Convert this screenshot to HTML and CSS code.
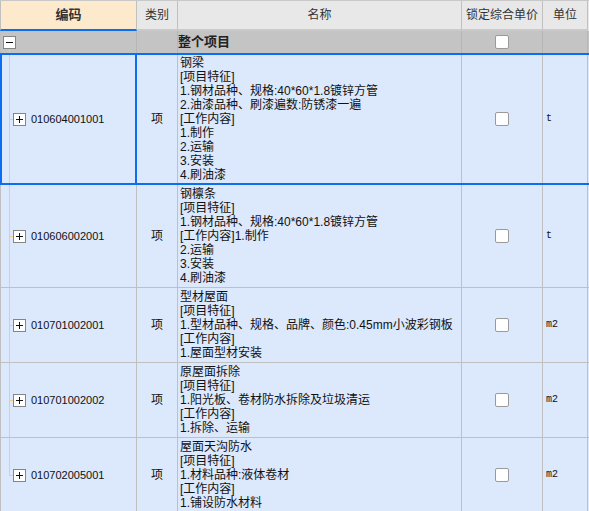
FILE: index.html
```html
<!DOCTYPE html>
<html lang="zh-CN">
<head>
  <meta charset="UTF-8">
  <title>清单</title>
  <link rel="stylesheet" href="styles.css">
</head>
<body>
  <div class="grid">
    <div class="row head">
      <div class="cell code-h">编码</div>
      <div class="cell">类别</div>
      <div class="cell">名称</div>
      <div class="cell">锁定综合单价</div>
      <div class="cell">单位</div>
    </div>

    <div class="row group">
      <div class="cell code"><span class="toggle"></span></div>
      <div class="cell"></div>
      <div class="cell name">整个项目</div>
      <div class="cell check"><span class="box"></span></div>
      <div class="cell"></div>
    </div>

    <div class="row sel">
      <div class="cell code"><span class="toggle plus"></span><span class="num">010604001001</span></div>
      <div class="cell type">项</div>
      <div class="cell name">钢梁<br>[项目特征]<br>1.钢材品种、规格:40*60*1.8镀锌方管<br>2.油漆品种、刷漆遍数:防锈漆一遍<br>[工作内容]<br>1.制作<br>2.运输<br>3.安装<br>4.刷油漆</div>
      <div class="cell check"><span class="box"></span></div>
      <div class="cell unit">t</div>
    </div>

    <div class="row">
      <div class="cell code"><span class="toggle plus"></span><span class="num">010606002001</span></div>
      <div class="cell type">项</div>
      <div class="cell name">钢檩条<br>[项目特征]<br>1.钢材品种、规格:40*60*1.8镀锌方管<br>[工作内容]1.制作<br>2.运输<br>3.安装<br>4.刷油漆</div>
      <div class="cell check"><span class="box"></span></div>
      <div class="cell unit">t</div>
    </div>

    <div class="row">
      <div class="cell code"><span class="toggle plus"></span><span class="num">010701002001</span></div>
      <div class="cell type">项</div>
      <div class="cell name">型材屋面<br>[项目特征]<br>1.型材品种、规格、品牌、颜色:0.45mm小波彩钢板<br>[工作内容]<br>1.屋面型材安装</div>
      <div class="cell check"><span class="box"></span></div>
      <div class="cell unit">m2</div>
    </div>

    <div class="row">
      <div class="cell code"><span class="toggle plus"></span><span class="num">010701002002</span></div>
      <div class="cell type">项</div>
      <div class="cell name">原屋面拆除<br>[项目特征]<br>1.阳光板、卷材防水拆除及垃圾清运<br>[工作内容]<br>1.拆除、运输</div>
      <div class="cell check"><span class="box"></span></div>
      <div class="cell unit">m2</div>
    </div>

    <div class="row last">
      <div class="cell code"><span class="toggle plus"></span><span class="num">010702005001</span></div>
      <div class="cell type">项</div>
      <div class="cell name">屋面天沟防水<br>[项目特征]<br>1.材料品种:液体卷材<br>[工作内容]<br>1.铺设防水材料</div>
      <div class="cell check"><span class="box"></span></div>
      <div class="cell unit">m2</div>
    </div>
  </div>
</body>
</html>
```

FILE: styles.css
```css
html {
  overflow: hidden;
}

body {
  margin: 0;
  background-color: #fff;
  font-family: "Liberation Sans", "Noto Sans CJK SC", sans-serif;
  font-size: 12px;
  color: #111;
}

.grid {
  width: 589px;
}

.row {
  display: grid;
  grid-template-columns: 137px 41px 284px 81px 45px 1fr;
  background-color: #dce8fc;
  border-bottom: 1px solid #c0c0c0;
}

.cell {
  box-sizing: border-box;
  border-right: 1px solid #c0c0c0;
  padding: 2px 0;
  line-height: 14px;
}

.cell:first-child {
  border-left: 1px solid #c0c0c0;
}

/* header */
.head {
  height: 30px;
  background-color: #e8e8e8;
  border-top: 1px solid #c8c8c8;
  border-bottom: none;
}

.head .cell {
  display: flex;
  align-items: center;
  justify-content: center;
  padding: 0;
  color: #333;
  border-bottom: 2px solid #cacaca;
}

.head .code-h {
  background-color: #fde9cc;
  font-weight: bold;
  font-size: 13px;
  border-bottom-color: #0b6df2;
}

/* group row */
.group {
  height: 22px;
  background-color: #c4c4c4;
  border-bottom: none;
}

.group .cell {
  padding: 0;
  border-right-color: #b6b6b6;
}

.group .name {
  display: flex;
  align-items: center;
  font-weight: bold;
  font-size: 13px;
  color: #222;
}

.group .code {
  padding-left: 2px;
}

/* selected row */
.sel {
  border-top: 2px solid #0b6df2;
  border-bottom: 2px solid #0b6df2;
}

.sel .cell {
  padding-top: 1px;
  padding-bottom: 1px;
}

.sel .code {
  border-left: 2px solid #0b6df2;
  border-right: 2px solid #0b6df2;
  padding-left: 11px;
}

/* code column with tree lines */
.code {
  position: relative;
  display: flex;
  align-items: center;
  padding-left: 12px;
}

.code::before {
  content: "";
  position: absolute;
  left: 8px;
  top: 0;
  bottom: 0;
  width: 1px;
  background-color: #f8c887;
}

.code::after {
  content: "";
  position: absolute;
  left: 8px;
  top: 50%;
  width: 4px;
  height: 1px;
  background-color: #f8c887;
}

.sel .code::before,
.sel .code::after {
  left: 7px;
}

.group .code::before {
  top: 17px;
}

.group .code::after {
  display: none;
}

.last .code::before {
  bottom: 50%;
}

.toggle {
  position: relative;
  box-sizing: border-box;
  width: 13px;
  height: 13px;
  border: 1px solid #858585;
  background-color: #fff;
  flex-shrink: 0;
}

.toggle::before,
.plus::after {
  content: "";
  position: absolute;
  background-color: #111;
}

.toggle::before {
  left: 2px;
  top: 5px;
  width: 7px;
  height: 1px;
}

.plus::after {
  left: 5px;
  top: 2px;
  width: 1px;
  height: 7px;
}

.num {
  margin-left: 5px;
  font-size: 11px;
  color: #111;
}

.type {
  display: flex;
  align-items: center;
  justify-content: center;
}

.name {
  padding-left: 2px;
  white-space: nowrap;
}

.check {
  display: flex;
  align-items: center;
  justify-content: center;
}

.box {
  box-sizing: border-box;
  width: 14px;
  height: 14px;
  border: 1px solid #9a9a9a;
  border-radius: 2px;
  background-color: #fff;
}

.unit {
  display: flex;
  align-items: center;
  padding-left: 3px;
  font-family: "Liberation Mono", monospace;
  font-size: 10px;
}
```
